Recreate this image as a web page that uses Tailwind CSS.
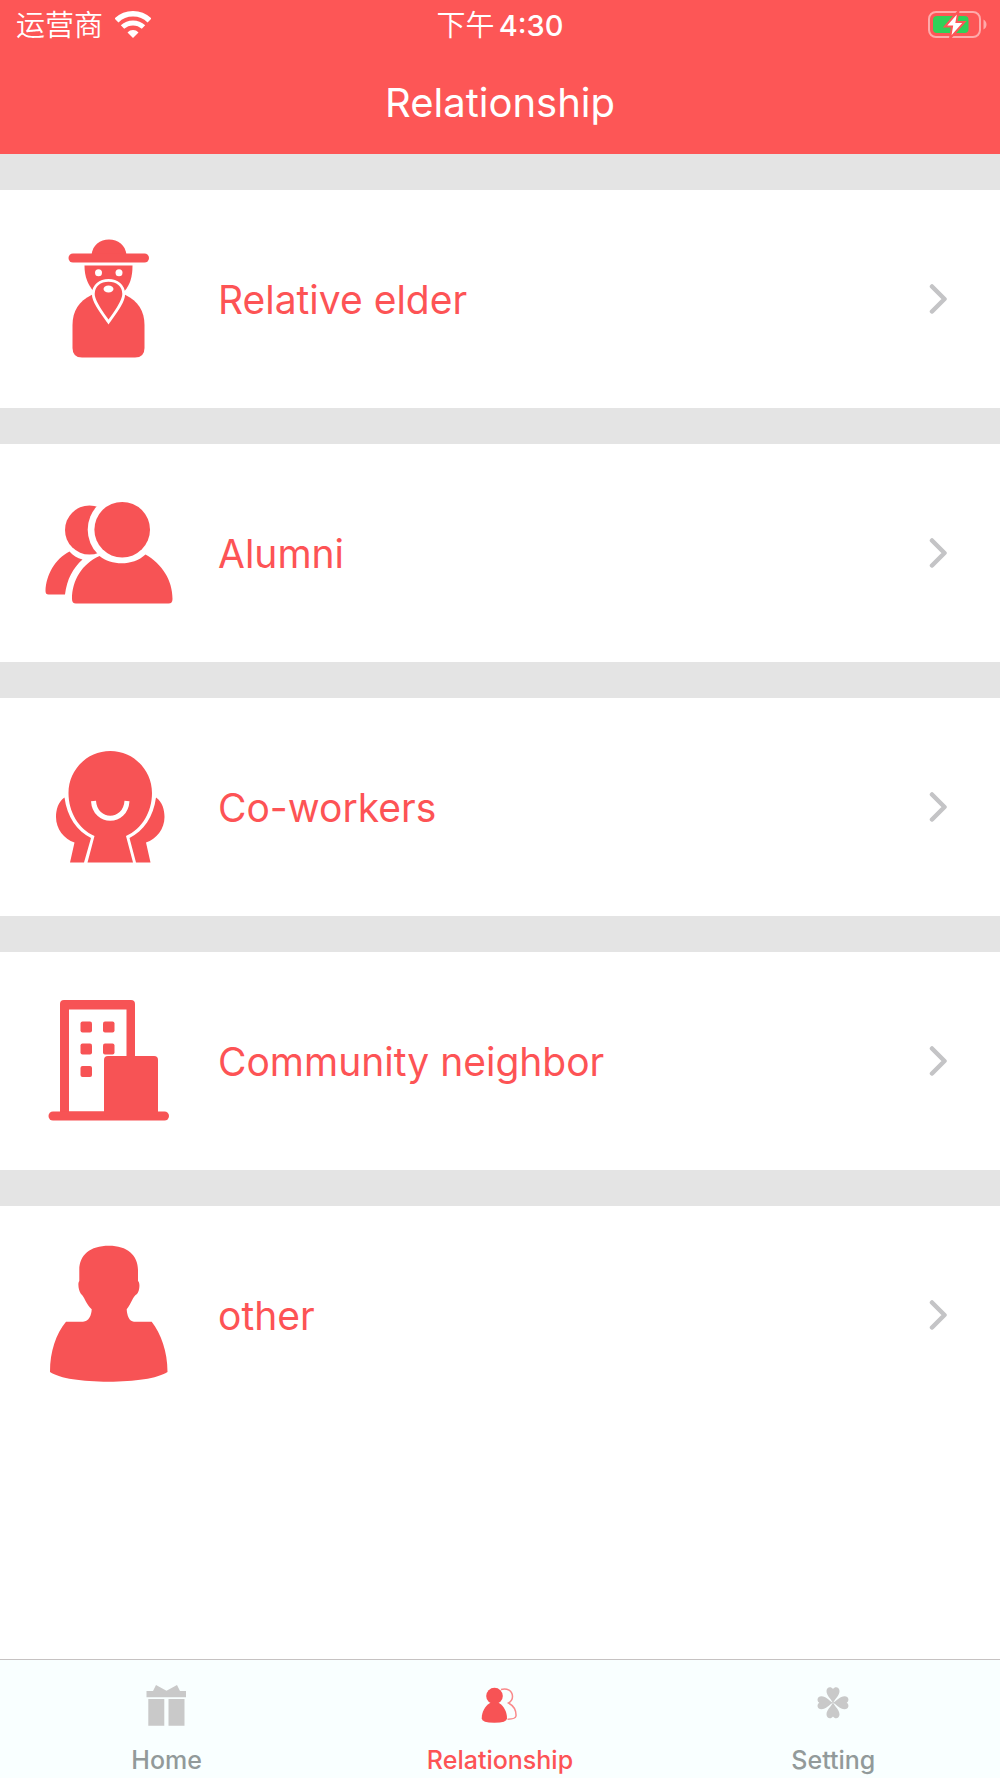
<!DOCTYPE html>
<html lang="en">
<head>
  <meta charset="UTF-8" />
  <meta name="viewport" content="width=device-width, initial-scale=1" />
  <title>Relationship</title>
  <script src="https://cdn.jsdelivr.net/npm/@tailwindcss/browser@4"></script>
</head>
<body class="min-h-screen flex flex-col bg-white font-[Inter,'Noto_Sans_CJK_SC',sans-serif]">
  <header class="bg-[#fd5656] text-white">
    <!-- Status bar -->
    <div class="grid grid-cols-3 items-center h-[50px] px-4 text-[29px] leading-8">
      <div class="flex items-center gap-3">
        <span class="pt-0.5 font-[350]" lang="zh-CN">运营商</span>
        <svg class="w-9 h-7" viewBox="0 0 36 28" fill="none" stroke="currentColor" aria-hidden="true">
          <path d="M1.5 9.5C10.5 0.5 25.5 0.5 34.5 9.5" stroke-width="5.5" />
          <path d="M7.5 16C13.5 10.5 22.5 10.5 28.5 16" stroke-width="5" />
          <path d="M12.5 21.5C15.5 18.2 20.5 18.2 23.5 21.5L18 27Z" fill="currentColor" stroke="none" />
        </svg>
      </div>
      <div class="flex justify-center gap-1 pt-0.5 whitespace-nowrap">
        <span class="font-[350]" lang="zh-CN">下午</span>
        <span class="font-medium">4:30</span>
      </div>
      <svg class="w-[60px] h-7 justify-self-end -mr-1" viewBox="0 0 60 28" aria-hidden="true">
        <rect x="1" y="1" width="51" height="25" rx="7" fill="none" stroke="#feaaaa" stroke-width="2" />
        <path d="M55.5 8.5C59.5 10.5 59.5 16.5 55.5 18.5Z" fill="#feaaaa" />
        <rect x="5" y="5" width="35.5" height="17" rx="4" fill="#30d158" />
        <path d="M30.5 0L17 15.5H24L22 27.5L36.5 11H28.5Z" fill="#fff" stroke="#fd5656" stroke-width="2" />
      </svg>
    </div>
    <h1 class="h-[104px] pt-7 text-center text-[40px] leading-[50px]">Relationship</h1>
  </header>

  <main>
    <ul>
      <li class="border-t-36 border-[#e4e4e4]">
        <a href="#" class="flex items-center h-[218px] pl-9 pr-[51px] text-[#fd5355] text-[39px] leading-12">
          <svg class="w-36 h-36 mr-[38px] shrink-0" viewBox="0 0 144 144" fill="#f75355" aria-hidden="true">
            <path d="M55.5 28C56.5 18 64 12.5 73 12.5S89.5 18 90.5 28Z" />
            <rect x="32.5" y="26.5" width="80.5" height="9" rx="4.5" />
            <path d="M48.5 38.5H96.5C96.5 50 94 58 88.5 64H57.5C52 58 48.5 50 48.5 38.5Z" />
            <path d="M55.5 68C43 74 36.5 84 36.5 98V121Q36.5 130.5 46 130.5H99Q108.5 130.5 108.5 121V98C108.5 84 102 74 89.5 68L72.5 60Z" />
            <path d="M72.5 53.3C64 53.3 57.3 58.5 57.3 67C57.3 75 66 86 72.5 95C79 86 87.7 75 87.7 67C87.7 58.5 81 53.3 72.5 53.3Z" stroke="#fff" stroke-width="2.8" />
            <g fill="#fff">
              <circle cx="62.5" cy="45.7" r="3.5" />
              <circle cx="83" cy="45.7" r="3.5" />
              <ellipse cx="72.5" cy="62" rx="5" ry="3.5" />
            </g>
          </svg>
          <span class="grow pt-0.5">Relative elder</span>
          <svg class="w-5 h-8" viewBox="0 0 20 32" fill="none" stroke="#c4c4c6" stroke-width="4.5" stroke-linecap="round" stroke-linejoin="round" aria-hidden="true"><path d="M3 3.5L15.5 16L3 28.5" /></svg>
        </a>
      </li>
      <li class="border-t-36 border-[#e4e4e4]">
        <a href="#" class="flex items-center h-[218px] pl-9 pr-[51px] text-[#fd5355] text-[39px] leading-12">
          <svg class="w-36 h-36 mr-[38px] shrink-0" viewBox="0 0 144 144" fill="#f75355" aria-hidden="true">
            <circle cx="53.5" cy="49" r="24.5" />
            <path d="M33.5 70.5C37 74.5 41 77 46.5 78.5C37 87 31 98 29 113.5H12.5Q9.5 113.5 9.5 110C10 94 19 78 33.5 70.5Z" />
            <circle cx="86.2" cy="48.7" r="34.5" fill="#fff" />
            <circle cx="86.2" cy="48.7" r="27.8" />
            <path d="M63.5 75C76 85 97 85 109.5 73.5C126 83 136.5 99 136.5 118Q136.5 122.5 132.5 122.5H40Q36 122.5 36 118C36 99 46 83 63.5 75Z" />
          </svg>
          <span class="grow pt-0.5">Alumni</span>
          <svg class="w-5 h-8" viewBox="0 0 20 32" fill="none" stroke="#c4c4c6" stroke-width="4.5" stroke-linecap="round" stroke-linejoin="round" aria-hidden="true"><path d="M3 3.5L15.5 16L3 28.5" /></svg>
        </a>
      </li>
      <li class="border-t-36 border-[#e4e4e4]">
        <a href="#" class="flex items-center h-[218px] pl-9 pr-[51px] text-[#fd5355] text-[39px] leading-12">
          <svg class="w-36 h-36 mr-[38px] shrink-0" viewBox="0 0 144 144" fill="#f75355" aria-hidden="true">
            <path d="M28.5 62.5C22 67 20 75 20 82C20 94 28 104 38.5 107.5L34 127.5H48L55 103C41 96 31 82 28.5 62.5Z" />
            <path d="M120 62.5C126.5 67 128.5 75 128.5 82C128.5 94 120.5 104 110 107.5L114.5 127.5H100L93.5 103C107.5 96 117.5 82 120 62.5Z" />
            <path d="M74.3 16C51 16 32.5 35 32.5 58C32.5 77 42.5 94 58.5 101L51.5 127.5H97L90 101C106 94 116 77 116 58C116 35 97.5 16 74.3 16Z" />
            <path d="M57.5 66C59 89 89.5 89 91 66" fill="none" stroke="#fff" stroke-width="5" />
          </svg>
          <span class="grow pt-0.5">Co-workers</span>
          <svg class="w-5 h-8" viewBox="0 0 20 32" fill="none" stroke="#c4c4c6" stroke-width="4.5" stroke-linecap="round" stroke-linejoin="round" aria-hidden="true"><path d="M3 3.5L15.5 16L3 28.5" /></svg>
        </a>
      </li>
      <li class="border-t-36 border-[#e4e4e4]">
        <a href="#" class="flex items-center h-[218px] pl-9 pr-[51px] text-[#fd5355] text-[39px] leading-12">
          <svg class="w-36 h-36 mr-[38px] shrink-0" viewBox="0 0 144 144" fill="#f75355" aria-hidden="true">
            <path fill-rule="evenodd" d="M28 11H95Q99 11 99 15V128H24V15Q24 11 28 11ZM33 20.5V122.5H90.5V20.5Z" />
            <rect x="12.5" y="122.5" width="120.5" height="9" rx="4.5" />
            <rect x="68" y="67" width="54" height="60" rx="4" />
            <rect x="44.5" y="32.5" width="11.5" height="11" rx="2" />
            <rect x="67" y="32.5" width="11.5" height="11" rx="2" />
            <rect x="44.5" y="54.5" width="11.5" height="11" rx="2" />
            <rect x="67" y="54.5" width="11.5" height="11" rx="2" />
            <rect x="44.5" y="77" width="11.5" height="11" rx="2" />
          </svg>
          <span class="grow pt-0.5">Community neighbor</span>
          <svg class="w-5 h-8" viewBox="0 0 20 32" fill="none" stroke="#c4c4c6" stroke-width="4.5" stroke-linecap="round" stroke-linejoin="round" aria-hidden="true"><path d="M3 3.5L15.5 16L3 28.5" /></svg>
        </a>
      </li>
      <li class="border-t-36 border-[#e4e4e4]">
        <a href="#" class="flex items-center h-[218px] pl-9 pr-[51px] text-[#fd5355] text-[39px] leading-12">
          <svg class="w-36 h-36 mr-[38px] shrink-0" viewBox="0 0 144 144" fill="#f75355" aria-hidden="true">
            <path d="M73 2.7C54 2.7 43.3 12 43.3 27V38C41.5 40 42.5 48 45 51C48 53 50 61 55.7 66.3C55.5 72 53 78.7 47 78.7H30C20 91 14 108 14 129C24 135.5 46 138.7 72.5 138.7S121 135.5 131.5 129C131.5 108 125 91 115.7 78.7H98C93 78.7 91 72 90.7 66.3C95 61 97 53 101 51C103.5 48 104.5 40 102 38V27C102 12 91 2.7 73 2.7Z" />
          </svg>
          <span class="grow pt-0.5">other</span>
          <svg class="w-5 h-8" viewBox="0 0 20 32" fill="none" stroke="#c4c4c6" stroke-width="4.5" stroke-linecap="round" stroke-linejoin="round" aria-hidden="true"><path d="M3 3.5L15.5 16L3 28.5" /></svg>
        </a>
      </li>
    </ul>
  </main>

  <!-- Tab bar -->
  <nav class="mt-auto grid grid-cols-3 h-[119px] pt-[22px] border-t border-[#c6c2c2] bg-[#f9ffff] text-[#929a9a] text-[25px] leading-8 font-medium">
    <a href="#" class="flex flex-col items-center gap-3.5">
      <svg class="w-12 h-12" viewBox="0 0 48 48" fill="#c9c9c9" aria-hidden="true">
        <path d="M3.5 9H10L13 3L23.5 8.7L34 3L37 9H43V15.3H3.5Z" />
        <path d="M5.3 17H21.3V43.7H5.3ZM25.5 17H41.5V43.7H25.5Z" />
      </svg>
      Home
    </a>
    <a href="#" class="flex flex-col items-center gap-3.5 text-[#fd5355]" aria-current="page">
      <svg class="w-12 h-12" viewBox="0 0 48 48" fill="#f75355" aria-hidden="true">
        <path d="M25 7.5C31 5.5 36.5 9 36.5 14.5C36.5 17.5 35 19.5 32.5 21C37 23.5 40.3 28.5 40 34Q39.5 37.2 31.5 37.2" fill="none" stroke="#f98a8b" stroke-width="1.5" />
        <circle cx="18.5" cy="14" r="8.3" />
        <path d="M14 21H23C28 24 31 30 31 36.5Q31 40.7 18.4 40.7T5.7 36.5C5.7 30 9 24 14 21Z" />
      </svg>
      Relationship
    </a>
    <a href="#" class="flex flex-col items-center gap-3.5">
      <svg class="w-12 h-12" viewBox="0 0 48 48" fill="#c9c9c9" aria-hidden="true">
        <path id="leaf" d="M24 21C22 16.5 17.5 14 17.5 9C17.5 5 22 4 24 7C26 4 30.5 5 30.5 9C30.5 14 26 16.5 24 21Z" />
        <use href="#leaf" transform="rotate(90 24 20.7)" />
        <use href="#leaf" transform="rotate(180 24 20.7)" />
        <use href="#leaf" transform="rotate(270 24 20.7)" />
      </svg>
      Setting
    </a>
  </nav>
</body>
</html>
